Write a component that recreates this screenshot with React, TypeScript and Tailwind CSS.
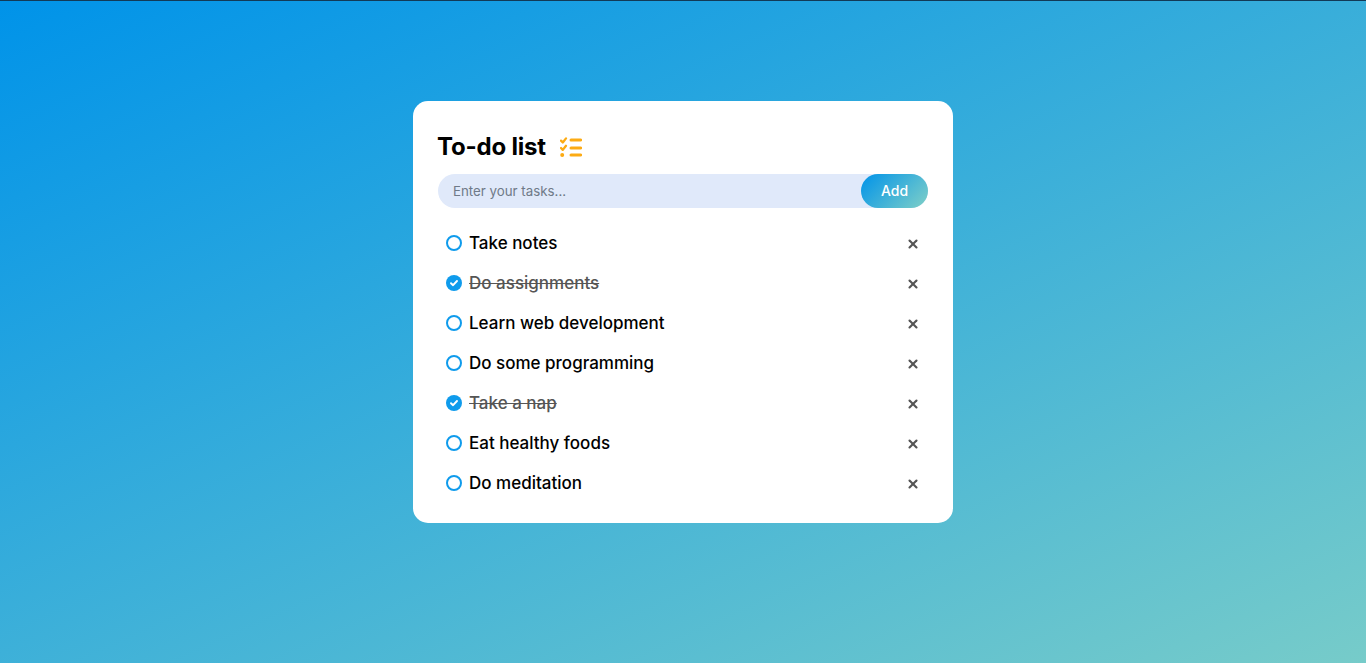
import { X } from 'lucide-react';

const TASKS = [
  { text: 'Take notes', done: false },
  { text: 'Do assignments', done: true },
  { text: 'Learn web development', done: false },
  { text: 'Do some programming', done: false },
  { text: 'Take a nap', done: true },
  { text: 'Eat healthy foods', done: false },
  { text: 'Do meditation', done: false },
];

function TodoIcon() {
  return (
    <svg width="22" height="20" viewBox="0 0 22 20" fill="none" stroke="#fcab14" strokeLinecap="round" strokeLinejoin="round">
      <path d="M1 3.6l1.8 1.9L6 1.4" strokeWidth="2.3" />
      <path d="M1 11l1.8 1.9L6 8.8" strokeWidth="2.3" />
      <circle cx="2.2" cy="18" r="2" fill="#fcab14" stroke="none" />
      <path d="M11 3h9.6M11 11h9.6M11 18h9.6" strokeWidth="3" />
    </svg>
  );
}

function Check({ done }: { done: boolean }) {
  if (!done) return <span className="w-4 h-4 rounded-full border-2 border-[#0f9bec] shrink-0" />;
  return (
    <span className="w-4 h-4 rounded-full bg-[#0f9bec] shrink-0 flex items-center justify-center">
      <svg width="10" height="10" viewBox="0 0 10 10" fill="none" stroke="white" strokeWidth="1.9" strokeLinecap="round" strokeLinejoin="round">
        <path d="M2 5.2l2.1 2L8 3" />
      </svg>
    </span>
  );
}

export default function App() {
  return (
    <div className="min-h-screen bg-[linear-gradient(156deg,#0093E9_0%,#80D0C7_108%)] font-['Inter','Noto_Sans',sans-serif] border-t border-[#123a57] pt-[100px]">
      <div className="w-[540px] h-[422px] mx-auto bg-white rounded-[15px] px-[25px] pt-[30px]">
        <div className="flex items-center gap-[14px] h-[32px] mb-[11px] -ml-[1px]">
          <h2 className="text-[24px] font-bold text-black tracking-[-0.2px]">To-do list</h2>
          <TodoIcon />
        </div>
        <div className="flex items-center h-[34px] rounded-[17px] bg-[#e0e9fa]">
          <input placeholder="Enter your tasks..." className="flex-1 min-w-0 h-full bg-transparent outline-none pl-[15px] pb-[1px] text-[13.3px] text-[#333] placeholder:text-[#6f7a88]" />
          <button className="w-[67px] h-full rounded-[17px] pb-[2px] bg-[linear-gradient(135deg,#0093E9,#80D0C7)] text-white text-[14px] font-medium">Add</button>
        </div>
        <ul className="mt-[15px]">
          {TASKS.map(t => (
            <li key={t.text} className="flex items-center h-[40px] pl-[8px] pr-[8px]">
              <Check done={t.done} />
              <span className={t.done ? 'ml-[7px] pt-[2px] text-[17px] font-medium line-through text-[#555]' : 'ml-[7px] pt-[2px] text-[17px] font-medium text-black'}>{t.text}</span>
              <span className="ml-auto pt-[2px]">
                <X size={14} strokeWidth={3.6} className="text-[#555]" />
              </span>
            </li>
          ))}
        </ul>
      </div>
    </div>
  );
}
